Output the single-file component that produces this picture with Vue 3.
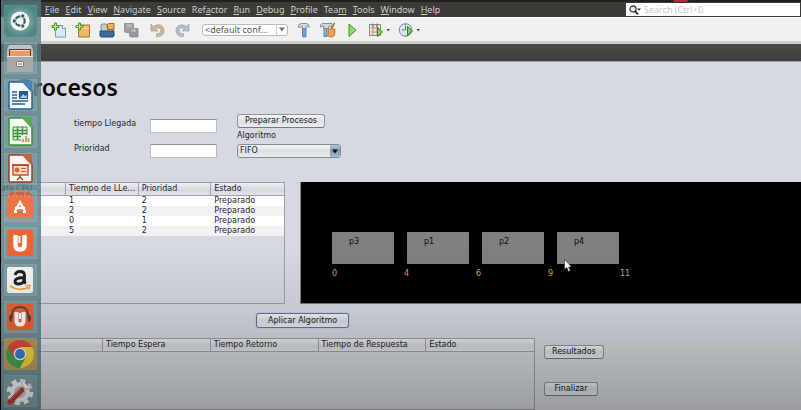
<script setup>
import { ref } from 'vue'

const menus = [
  ['', 'F', 'ile'], ['', 'E', 'dit'], ['', 'V', 'iew'], ['', 'N', 'avigate'], ['', 'S', 'ource'],
  ['Ref', 'a', 'ctor'], ['', 'R', 'un'], ['', 'D', 'ebug'], ['', 'P', 'rofile'], ['Tea', 'm', ''],
  ['', 'T', 'ools'], ['', 'W', 'indow'], ['', 'H', 'elp'],
]
const rows = ref([
  ['', '1', '2', 'Preparado'],
  ['', '2', '2', 'Preparado'],
  ['', '0', '1', 'Preparado'],
  ['', '5', '2', 'Preparado'],
])
const blocks = ['p3', 'p1', 'p2', 'p4']
const ticks = [0, 4, 6, 9, 11]
const arrival = ref('')
const priority = ref('')
const algorithm = ref('FIFO')
const search = ref('')
</script>

<template>
  <div class="screen">
    <header class="menubar">
      <nav class="menus">
        <a v-for="m in menus" :key="m.join('')" href="#">{{ m[0] }}<u>{{ m[1] }}</u>{{ m[2] }}</a>
      </nav>
      <span class="marker"></span>
      <label class="search">
        <svg viewBox="0 0 14 12" width="14" height="12">
          <circle cx="5" cy="5" r="3" fill="#e8edf5" stroke="#3a3f4c" stroke-width="1.3" />
          <path d="M7 7l3 3.4" stroke="#222" stroke-width="1.8" />
          <path d="M9 4.500h4l-2 2.200z" fill="#222" />
        </svg>
        <input v-model="search" type="text" placeholder="Search (Ctrl+I)" aria-label="Search" />
      </label>
    </header>

    <div class="toolbar">
      <div class="group files">
        <button aria-label="New file">
          <svg viewBox="0 0 16 16" width="16" height="16">
            <path d="M4.500 3.500h7l3 3v8.500h-10z" fill="#dce9f6" stroke="#8198ae" />
            <path d="M11.500 3.500v3h3" fill="#fff" stroke="#8198ae" />
            <path d="M3.500 1h2v2.500h2.500v2h-2.500v2.500h-2v-2.500h-2.500v-2h2.500z" fill="#b6ef7c" stroke="#4d9426" />
          </svg>
        </button>
        <button aria-label="New project">
          <svg viewBox="0 0 16 16" width="16" height="16">
            <path d="M3.500 4.500l2-1.500h9v12h-11z" fill="#f1b765" stroke="#ad7733" />
            <path d="M4 6h10" stroke="#ffdda3" />
            <path d="M3.500 1h2v2.500h2.500v2h-2.500v2.500h-2v-2.500h-2.500v-2h2.500z" fill="#b6ef7c" stroke="#4d9426" />
          </svg>
        </button>
        <button aria-label="Open project">
          <svg viewBox="0 0 16 16" width="16" height="16">
            <path d="M2 13V3l1-1h5v4h6v7z" fill="#c5ced6" stroke="#7b8a99" />
            <path d="M8.500 2.500l1-1h5.500v6h-6.500z" fill="#efb15a" stroke="#9b6c2e" />
            <path d="M1 9h14v5l-1 1h-12l-1-1z" fill="#3e6a98" stroke="#294d73" />
          </svg>
        </button>
        <button aria-label="Save all">
          <svg viewBox="0 0 16 16" width="16" height="16" stroke="#93979a">
            <path d="M1.500 1.500h9v9h-8l-1-1z" fill="#9da1a3" />
            <path d="M3.500 2h5v3.500h-5z" fill="#b5b9bb" stroke="none" />
            <path d="M6.500 6.500h8.500v8.500h-7.500l-1-1z" fill="#92989c" />
            <path d="M8.500 7h4.500v3h-4.500z" fill="#b5babd" stroke="none" />
          </svg>
        </button>
      </div>
      <div class="group history">
        <button aria-label="Undo">
          <svg viewBox="0 0 16 16" width="16" height="16">
            <path d="M1 2v7h7l-2.300-2.300c3-1.700 5-.5 5 1.800s-1.700 3.200-4.200 3.200v3c5 0 7.500-2.500 7.500-6.200 0-5-5.500-7.700-10.500-4z" fill="#c5b5a2" stroke="#ae9c87" stroke-width=".7" />
          </svg>
        </button>
        <button aria-label="Redo">
          <svg viewBox="0 0 16 16" width="16" height="16">
            <path d="M15 2v7h-7l2.300-2.300c-3-1.700-5-.5-5 1.800s1.700 3.200 4.200 3.200v3c-5 0-7.500-2.500-7.500-6.200 0-5 5.500-7.700 10.500-4z" fill="#b3bec7" stroke="#99a7b2" stroke-width=".7" />
          </svg>
        </button>
      </div>
      <span class="combo config">
        <select aria-label="Configuration">
          <option>&lt;default conf...</option>
        </select>
        <span class="drop"><svg viewBox="0 0 6 5" width="6" height="5"><path d="M0 .5h6l-3 4z" fill="#777" /></svg></span>
      </span>
      <div class="group build">
        <button aria-label="Build">
          <svg viewBox="0 0 16 16" width="16" height="16">
            <path d="M6.500 6h3.500v8.500q-1.700 1-3.500 0z" fill="#6ea4df" stroke="#3b6ca5" stroke-width=".8" />
            <path d="M2.500 5.500V3.500q1-2 3-2h5q2 0 3 3l-1 .8q-1-1.300-2.300-1.300v2.500h-4v-2.500q-1.700 0-2.200 1.500z" fill="#d7dddf" stroke="#6c7b83" stroke-width=".8" />
          </svg>
        </button>
        <button aria-label="Clean and build">
          <svg viewBox="0 0 16 16" width="16" height="16">
            <path d="M4 5h3v9.500h-3z" fill="#8bb3dd" stroke="#496f98" stroke-width=".8" />
            <path d="M.5 5V3q1-1.500 2.500-1.500h9v3h-3.500v2h-5v-2.500q-1.500-.3-2 1z" fill="#d2d7d9" stroke="#6c7b83" stroke-width=".8" />
            <path d="M14.500 1l-3 6" stroke="#a16731" stroke-width="1.500" />
            <path d="M8 7.500q3-2 7 0l-.5 6-2.500 1.500-4.500-1q1.500-3 .5-6.500z" fill="#f0a152" stroke="#ad6428" stroke-width=".8" />
          </svg>
        </button>
        <button aria-label="Run">
          <svg viewBox="0 0 16 16" width="16" height="16">
            <path d="M5 2l7 6.200-7 6.300z" fill="#93d967" stroke="#3e8c2c" />
          </svg>
        </button>
        <button class="with-drop" aria-label="Debug">
          <svg viewBox="0 0 22 16" width="22" height="16">
            <path d="M1.500 2.500h11v11h-11z" fill="#e9e5e2" stroke="#8c8a88" />
            <path d="M3 6h8M3 10h8M5 3v10M9 3v10" stroke="#d28980" />
            <path d="M5 1.500v4M9 1.500v4" stroke="#777" />
            <path d="M9.500 5.500l5 4.500-5 4.500z" fill="#83cd58" stroke="#3a7d2a" />
            <path d="M18.500 7h3.500l-1.700 2.200z" fill="#444" />
          </svg>
        </button>
        <button class="with-drop" aria-label="Profile">
          <svg viewBox="0 0 22 16" width="22" height="16">
            <circle cx="7.500" cy="8" r="6.300" fill="#dde8f2" stroke="#74899e" />
            <path d="M7.500 8V3.500M7.500 8h-4M7.500 2v1M7.500 13v1" stroke="#61788f" />
            <path d="M9.500 4.500l5 4.500-5 4.500z" fill="#83cd58" stroke="#3a7d2a" />
            <path d="M18.500 7h3.500l-1.700 2.200z" fill="#444" />
          </svg>
        </button>
      </div>
    </div>
    <div class="tabstrip"></div>

    <main>
      <h1>Procesos</h1>

      <form class="form" @submit.prevent>
        <div class="fields">
          <label for="arrival">tiempo Llegada</label>
          <input id="arrival" v-model="arrival" type="text" />
          <label for="priority">Prioridad</label>
          <input id="priority" v-model="priority" type="text" />
        </div>
        <div class="actions">
          <button class="btn" type="button">Preparar Procesos</button>
          <label for="algorithm">Algoritmo</label>
          <span class="combo algorithm">
            <select id="algorithm" v-model="algorithm"><option>FIFO</option></select>
            <span class="drop"><svg viewBox="0 0 6 5" width="6" height="5"><path d="M0 .5h6l-3 4z" fill="#111" /></svg></span>
          </span>
        </div>
      </form>

      <section class="overview">
        <div class="pane processes">
          <table>
            <thead>
              <tr><th class="cut">afa CPU</th><th>Tiempo de LLe...</th><th>Prioridad</th><th>Estado</th></tr>
            </thead>
            <tbody>
              <tr v-for="(row, i) in rows" :key="i"><td v-for="(cell, j) in row" :key="j">{{ cell }}</td></tr>
            </tbody>
          </table>
        </div>
        <div class="chart">
          <div class="blocks"><span v-for="b in blocks" :key="b">{{ b }}</span></div>
          <div class="ticks"><span v-for="t in ticks" :key="t">{{ t }}</span></div>
          <svg class="cursor" viewBox="0 0 8 13" width="8" height="13">
            <path d="M.5 .5v10l2.300-2 1.700 4 1.800-.8-1.700-3.700h3z" fill="#fff" stroke="#333" stroke-width=".6" />
          </svg>
        </div>
      </section>

      <div class="apply"><button class="btn focused" type="button">Aplicar Algoritmo</button></div>

      <section class="results">
        <div class="pane outcome">
          <table>
            <thead>
              <tr><th class="cut">r</th><th>Tiempo Espera</th><th>Tiempo Retorno</th><th>Tiempo de Respuesta</th><th>Estado</th></tr>
            </thead>
          </table>
        </div>
        <div class="side">
          <button class="btn" type="button">Resultados</button>
          <button class="btn" type="button">Finalizar</button>
        </div>
      </section>
    </main>

    <aside class="launcher">
      <button class="tile dash" aria-label="Dash">
        <svg viewBox="0 0 32 32">
          <circle cx="16" cy="16" r="9.500" fill="#f3f7f6" />
          <circle cx="16" cy="16" r="4.700" fill="none" stroke="#375a5c" stroke-width="2.200" />
          <g fill="#375a5c" stroke="#f3f7f6"><circle cx="10.300" cy="16" r="2.200" /><circle cx="18.800" cy="11" r="2.200" /><circle cx="18.800" cy="21" r="2.200" /></g>
        </svg>
      </button>
      <button class="tile" aria-label="Files">
        <svg viewBox="0 0 32 32">
          <path d="M5 3h22l2 5v20q0 2-2 2H5q-2 0-2-2V8z" fill="#c3c1bf" />
          <path d="M5 7h22v7H5z" fill="#483c37" />
          <path d="M6 9h20v5H6z" fill="#ed9a62" /><path d="M6 8h20v1H6z" fill="#f7d2b5" />
          <path d="M3 14h26v14q0 2-2 2H5q-2 0-2-2z" fill="#aaa8a6" />
          <path d="M3 14h26v1H3z" fill="#e2e0de" />
          <rect x="12.500" y="19.500" width="7" height="5" rx="1" fill="#e9e9e9" stroke="#777" /><path d="M14 22h4" stroke="#777" />
        </svg>
      </button>
      <button class="tile" aria-label="Writer">
        <svg viewBox="0 0 32 32">
          <path d="M6 3h14l8 9v17q0 1-1 1H6q-1 0-1-1V4q0-1 1-1z" fill="#f6fafc" stroke="#24659a" stroke-width="1.500" />
          <path d="M17 2h11v12z" fill="#4684b5" />
          <path d="M8 13h5M8 16h5M8 19h5M8 22h16M8 25h13" stroke="#2b608c" stroke-width="1.500" />
          <path d="M15 12h9v8h-9z" fill="#285a86" /><path d="M16 19l3-4 2 2 2-1v3z" fill="#a9cbe2" />
        </svg>
      </button>
      <button class="tile" aria-label="Calc">
        <svg viewBox="0 0 32 32">
          <path d="M6 2h14l8 9v17q0 1-1 1H6q-1 0-1-1V3q0-1 1-1z" fill="#f6faf3" stroke="#359233" stroke-width="1.500" />
          <path d="M17 1h11v12z" fill="#56ad4b" />
          <path d="M9 11h14v13H9z" fill="#dff0d9" stroke="#37923a" />
          <path d="M9 14.500h14M9 17.500h14M9 20.500h14M13.500 11v13M18.500 11v13" stroke="#37923a" stroke-width="1.300" />
          <path d="M17 19h9v8h-9z" fill="#f2eee3" /><path d="M19 26v-3M22 26v-6M24.500 26v-4" stroke="#c79352" stroke-width="1.700" />
        </svg>
      </button>
      <button class="tile" aria-label="Impress">
        <svg viewBox="0 0 32 32">
          <path d="M6 2h14l8 9v17q0 1-1 1H6q-1 0-1-1V3q0-1 1-1z" fill="#faf5f1" stroke="#8e4527" stroke-width="1.500" />
          <path d="M17 1h11v12z" fill="#b96a45" />
          <path d="M9 12h15v10H9z" fill="#f6d8c4" stroke="#c25c32" stroke-width="1.500" />
          <path d="M8 12h17M16 22v2M13 27l3-3 3 3" fill="none" stroke="#a84b28" stroke-width="1.500" />
          <circle cx="13" cy="17" r="2.500" fill="#d16b3d" /><path d="M17 15.500h5M17 18.500h5" stroke="#c25c32" />
        </svg>
      </button>
      <button class="tile" aria-label="Software Center">
        <svg viewBox="0 0 32 32">
          <path d="M3 6h26v20q0 2-2 2H5q-2 0-2-2z" fill="#ec7446" />
          <path d="M3 6l4-4h18l4 4z" fill="#c76443" />
          <path d="M11 6V3q0-2 2-2h6q2 0 2 2v3" fill="none" stroke="#d98060" stroke-width="1.500" />
          <path d="M4 6h24" stroke="#f0ad8e" stroke-dasharray="2 2" />
          <path d="M11 21l5-9 5 9M11 18h10" fill="none" stroke="#fff" stroke-width="2.300" /><path d="M10 22h3M19 22h3" stroke="#fff" stroke-width="2" />
        </svg>
      </button>
      <button class="tile" aria-label="Ubuntu One">
        <svg viewBox="0 0 32 32">
          <rect x="3" y="3" width="26" height="26" rx="2" fill="#ee6534" />
          <path d="M11.500 8v10q0 4.500 4.500 4.500t4.500-4.500V8" fill="none" stroke="#fff" stroke-width="4.500" /><path d="M15.500 9v7" stroke="#fff" stroke-width="2" />
        </svg>
      </button>
      <button class="tile" aria-label="Amazon">
        <svg viewBox="0 0 32 32">
          <rect x="3" y="3" width="26" height="26" rx="2" fill="#f3f5f4" />
          <path d="M11 11q1-3.500 5-3.500 4.500 0 4.500 4v5q0 2 1.300 3M20 13.500q-9 0-9 4 0 2.500 3.500 2.500 5.500 0 5.500-5" fill="none" stroke="#1e2022" stroke-width="2.800" />
          <path d="M6 22q9 6 18 1.500" fill="none" stroke="#f2a03a" stroke-width="1.800" /><path d="M21.500 21.500h4.500l-1.500 4" fill="none" stroke="#f2a03a" stroke-width="1.500" />
        </svg>
      </button>
      <button class="tile" aria-label="Music Store">
        <svg viewBox="0 0 32 32">
          <rect x="3" y="3" width="26" height="26" rx="2" fill="#ec6233" />
          <path d="M8 17v-3q0-8 8-8t8 8v3" fill="none" stroke="#604942" stroke-width="1.800" />
          <path d="M8 13v8q-3-1-3-4t3-4zM24 13v8q3-1 3-4t-3-4z" fill="#52433e" />
          <path d="M12.500 11v9q0 3.500 3.500 3.500t3.500-3.500v-9" fill="none" stroke="#fff" stroke-width="4" /><path d="M16 12v6" stroke="#fff" stroke-width="2" />
        </svg>
      </button>
      <button class="tile chrome" aria-label="Chrome">
        <svg viewBox="0 0 32 32">
          <path d="M16 16L3.900 9A14 14 0 0 1 28.100 9z" fill="#dd493a" />
          <path d="M16 16L28.100 9A14 14 0 0 1 16 30z" fill="#f8d13d" />
          <path d="M16 16V30A14 14 0 0 1 3.900 9z" fill="#44a34d" />
          <path d="M16 9h12.100l-6.100 10.500z" fill="#f8d13d" /><path d="M22 19.500L16 30 10 19.500z" fill="#44a34d" /><path d="M10 19.500L3.900 9H16z" fill="#dd493a" />
          <path d="M22 19.500L28.100 9 30 16 26 26 16 30z" fill="#f8d13d" />
          <circle cx="16" cy="16" r="6.300" fill="#f0f3f5" /><circle cx="16" cy="16" r="4.900" fill="#347fc9" />
        </svg>
      </button>
      <button class="tile" aria-label="System Settings">
        <svg viewBox="0 0 32 32">
          <circle cx="16" cy="17" r="11.300" fill="none" stroke="#f2f3f3" stroke-width="4" stroke-dasharray="5 3.875" />
          <circle cx="16" cy="17" r="8" fill="#c2c7c7" stroke="#f2f3f3" stroke-width="4" />
          <path d="M14 19l9-9" stroke="#fff" stroke-width="4" />
          <path d="M22 4a5 5 0 1 0 6 6l-4 1-3-3z" fill="#fff" stroke="#919a9b" stroke-width=".7" />
          <path d="M6 27l12-12" stroke="#bd3936" stroke-width="5" stroke-linecap="round" /><path d="M6 25l10-10" stroke="#d86a63" stroke-width="1" />
        </svg>
      </button>
    </aside>
    <div class="shade"></div>
  </div>
</template>

<style>
body { overflow: hidden; }
</style>

<style scoped>
* { box-sizing: border-box; }
.screen {
  position: relative;
  display: flex;
  flex-direction: column;
  min-height: 100vh;
  overflow: hidden;
  background: #d6d9e0;
  color: #26272c;
  font: 8px/10px "DejaVu Sans", sans-serif;
}
button, input, select { margin: 0; padding: 0; border: 0; background: none; color: inherit; font: inherit; }
svg { display: block; flex: none; }

.menubar {
  display: flex;
  align-items: center;
  height: 17px;
  padding: 1px 1px 1px 45px;
  background: #3c3b37;
  border-top: 2px solid #20201c;
  color: #cfccc4;
  font: 9px/12px "Noto Sans", sans-serif;
}
.menus { display: flex; flex: 1; gap: 6px; }
.menus a { color: inherit; text-decoration: none; }
.marker { position: absolute; top: 0; left: 84%; width: 15px; height: 2px; border-radius: 0 0 8px 8px; background: #b3283c; }
.search { display: flex; align-items: center; width: 174px; height: 13px; padding-left: 2px; gap: 2px; background: #fff; }
.search input { flex: 1; min-width: 0; height: 12px; outline: 0; }
.search input::placeholder { color: #c6c6c6; opacity: 1; }

.toolbar {
  display: flex;
  align-items: center;
  height: 27px;
  padding-left: 51px;
  background: #f0f0ee;
  border-top: 1px solid #fff;
  border-bottom: 3px solid #cfcfcd;
}
.group { display: flex; }
.group button { width: 16px; height: 16px; }
.group .with-drop { width: 22px; }
.files, .history { gap: 8px; }
.history { margin-left: 11px; }
.build { gap: 8px; margin-left: 8px; }
.tabstrip { height: 18px; background: linear-gradient(#4a4943, #403f3a); border-bottom: 1px solid #a2a3a3; }

.combo { display: flex; border: 1px solid #a8abb1; border-radius: 3px; }
.combo select { flex: 1; min-width: 0; appearance: none; outline: 0; }
.combo .drop { display: flex; align-items: center; justify-content: center; }
.config { width: 86px; height: 12px; margin-left: 12px; background: #fff; border-color: #bbb; color: #555; font: 9px/10px "Noto Sans", sans-serif; }
.config select { padding-left: 2px; }
.config .drop { width: 11px; border-left: 1px solid #ccc; }

main { display: flex; flex: 1; flex-direction: column; }
h1 { margin: 10px 0 12px; padding-left: 18px; color: #08080a; font: 600 23px/30px "Noto Sans", sans-serif; }

.form { display: flex; gap: 21px; padding-left: 74px; }
.fields { display: grid; grid-template-columns: 76px 66px; row-gap: 11px; padding-top: 5px; }
.fields input { width: 67px; height: 14px; padding: 0 3px; border: 1px solid #b9bcc4; border-top-color: #8f929a; background: #fff; }
.actions { display: flex; flex-direction: column; align-items: flex-start; }
.actions label { padding: 3px 0; line-height: 10px; }
.btn {
  height: 14px;
  padding: 0 7px;
  border: 1px solid #8f949e;
  border-bottom-color: #747983;
  border-radius: 3px;
  background: linear-gradient(#f5f6f8, #dcdfe5 50%, #e9ebef);
  color: #1b1c20;
}
.algorithm { width: 104px; height: 14px; border-color: #858a94; background: linear-gradient(#f5f6f8, #dcdfe5 50%, #e9ebef); }
.algorithm select { padding-left: 2px; }
.algorithm .drop { width: 10px; background: linear-gradient(#b4c6d6, #7d9ab3 50%, #a5bccf); }

.overview { display: flex; gap: 15px; margin-top: 24px; }
.pane { border: 1px solid #9c9fa8; border-left: 0; }
.pane table { width: 100%; border-spacing: 0; table-layout: fixed; }
.pane th {
  height: 13px;
  padding: 0 0 0 3px;
  overflow: hidden;
  border-right: 1px solid #a0a3ab;
  border-bottom: 1px solid #a0a3ab;
  background: linear-gradient(#eceef2, #d5d8df 60%, #e2e4e9);
  font-weight: 400;
  text-align: left;
  white-space: nowrap;
}
.pane th:last-child { border-right: 0; }
.pane th.cut { padding-left: 1px; }
.pane td { height: 10px; padding: 0 0 0 3px; background: #fff; line-height: 10px; }
.pane tr:nth-child(even) td { background: #f2f2f2; }
.processes { width: 285px; min-height: 122px; }
.processes th:first-child { width: 66px; }

.chart { position: relative; flex: 1; padding: 50px 0 0 31px; border-left: 1px solid #888; border-bottom: 1px solid #777; background: #000; }
.blocks { display: flex; gap: 13px; }
.blocks span { width: 62px; height: 32px; padding: 5px 17px; background: #808080; color: #0c0c0c; }
.ticks { display: flex; margin-top: 5px; color: #d3a93f; }
.ticks span { width: 72px; }
.cursor { position: absolute; left: 263px; top: 77px; }

.apply { padding: 9px 0 10px 256px; }
.apply .btn { height: 15px; padding: 0 11px; }
.btn.focused { border-color: #5b7aa3; box-shadow: 0 0 1px #5b7aa3; }

.results { display: flex; flex: 1; gap: 9px; min-height: 71px; }
.outcome { width: 535px; }
.outcome th:first-child { width: 103px; }
.side { display: flex; flex-direction: column; align-items: flex-start; gap: 23px; padding-top: 7px; }
.side .btn { min-width: 54px; }

.launcher {
  position: absolute;
  inset: 0 auto 0 0;
  display: flex;
  flex-direction: column;
  gap: 5px;
  width: 41px;
  padding: 5px 0 0 3px;
  border-left: 1px solid #000;
  background: rgba(82, 120, 128, .78);
}
.tile { width: 33px; height: 32px; border-radius: 3px; background: rgba(160, 190, 192, .3); box-shadow: inset 0 0 1px #c4d6d6; }
.tile svg { width: 32px; height: 32px; }
.tile.dash { background: radial-gradient(#9bc4bd, #4f8783 70%); }
.tile.chrome { background: #b59a5c; }
.shade { position: absolute; inset: 60% 0 0; background: linear-gradient(transparent, rgba(0, 0, 0, .08) 40%, rgba(0, 0, 0, .28)); pointer-events: none; }
</style>
